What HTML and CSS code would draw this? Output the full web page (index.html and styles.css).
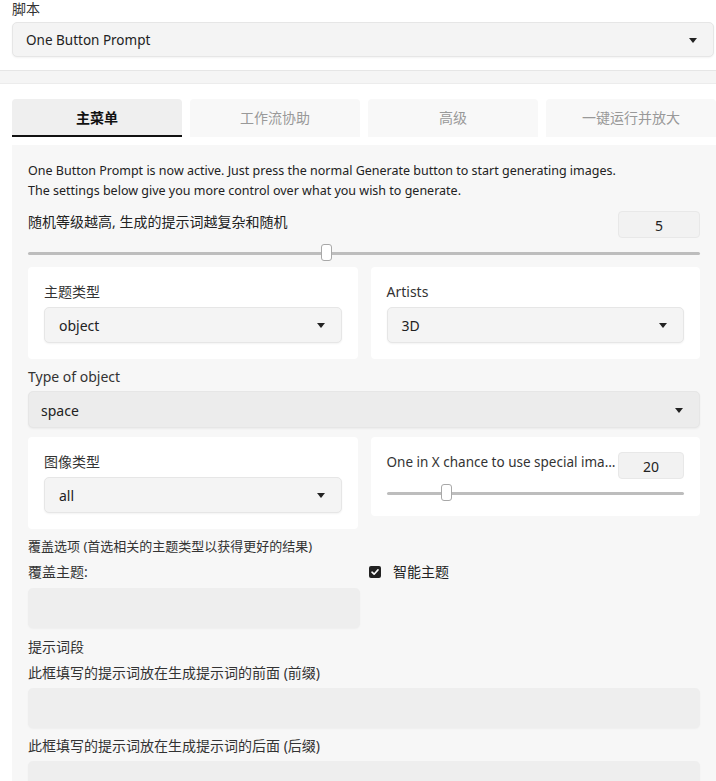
FILE: index.html
```html
<!DOCTYPE html>
<html lang="zh">
<head>
<meta charset="UTF-8">
<title>One Button Prompt</title>
<link rel="stylesheet" href="styles.css">
</head>
<body>

<!-- Skript Auswahl -->
<div class="script">
    <div class="label">脚本</div>
    <div class="select top">One Button Prompt<span class="caret"></span></div>
</div>

<div class="divider"></div>

<!-- Tabs -->
<div class="tabs">
    <div class="tab active">主菜单</div>
    <div class="tab">工作流协助</div>
    <div class="tab">高级</div>
    <div class="tab">一键运行并放大</div>
</div>

<div class="panel">
    <p class="intro">One Button Prompt is now active. Just press the normal Generate button to start generating images.</p>
    <p class="intro">The settings below give you more control over what you wish to generate.</p>

    <div class="num-row level">
        <span>随机等级越高, 生成的提示词越复杂和随机</span>
        <div class="num wide">5</div>
    </div>
    <div class="slider level-slider">
        <div class="thumb" style="left: 293px;"></div>
    </div>

    <div class="cards first">
        <div class="card">
            <div class="label">主题类型</div>
            <div class="select">object<span class="caret"></span></div>
        </div>
        <div class="card">
            <div class="label">Artists</div>
            <div class="select">3D<span class="caret"></span></div>
        </div>
    </div>

    <div class="label type-label">Type of object</div>
    <div class="select dark">space<span class="caret"></span></div>

    <div class="cards second">
        <div class="card">
            <div class="label">图像类型</div>
            <div class="select">all<span class="caret"></span></div>
        </div>
        <div class="card short">
            <div class="num-row">
                <span class="chance">One in X chance to use special ima…</span>
                <div class="num">20</div>
            </div>
            <div class="slider chance-slider">
                <div class="thumb" style="left: 54px;"></div>
            </div>
        </div>
    </div>

    <div class="label small override">覆盖选项 (首选相关的主题类型以获得更好的结果)</div>
    <div class="override-row">
        <div class="half">
            <div class="label">覆盖主题:</div>
            <div class="textbox"></div>
        </div>
        <label class="check">
            <span class="box"><svg width="12" height="12" viewBox="0 0 12 12"><path d="M3 6.2 L5.1 8.2 L9 3.9" fill="none" stroke="#fff" stroke-width="1.6" stroke-linecap="round" stroke-linejoin="round"/></svg></span>
            智能主题
        </label>
    </div>

    <div class="label section">提示词段</div>
    <div class="label">此框填写的提示词放在生成提示词的前面 (前缀)</div>
    <div class="textbox"></div>
    <div class="label">此框填写的提示词放在生成提示词的后面 (后缀)</div>
    <div class="textbox"></div>
</div>

</body>
</html>
```

FILE: styles.css
```css
/* Allgemeine Stile */
body {
    margin: 0;
    padding: 0;
    width: 716px;
    height: 781px;
    font-family: "Noto Sans", "Noto Sans CJK SC", sans-serif;
    font-size: 14px;
    color: #222;
    background-color: white;
    overflow: hidden;
}

p {
    margin: 0;
}

.label {
    font-size: 14px;
    line-height: 18px;
    color: #333;
}

/* Skript Auswahl */
.script {
    padding: 0 2px 0 12px;
}

.script .label {
    line-height: 16px;
    height: 16px;
    padding-top: 1px;
    margin-bottom: -1px;
}

.select {
    position: relative;
    height: 36px;
    line-height: 36px;
    padding-left: 14px;
    background-color: #f4f4f4;
    border: 1px solid #e6e6e6;
    border-radius: 5px;
    box-sizing: border-box;
    box-shadow: 0 1px 2px rgba(0, 0, 0, 0.05);
    color: #222;
}

.select.top {
    margin-top: 6px;
    height: 35px;
    line-height: 34px;
    font-size: 13.5px;
    padding-left: 13px;
}

.select.dark {
    background-color: #ececec;
    height: 37px;
    line-height: 37px;
    padding-left: 12px;
}

.caret {
    position: absolute;
    right: 16px;
    top: 50%;
    margin-top: -2px;
    border-left: 4px solid transparent;
    border-right: 4px solid transparent;
    border-top: 5px solid #222;
}

.divider {
    margin-top: 13px;
    height: 12px;
    background-color: #f5f5f5;
    border-top: 1px solid #e6e6e6;
    border-bottom: 1px solid #ececec;
}

/* Tabs */
.tabs {
    display: flex;
    gap: 8px;
    padding: 15px 0 0 12px;
}

.tab {
    width: 170px;
    flex-shrink: 0;
    height: 38px;
    line-height: 38px;
    text-align: center;
    background-color: #f8f8f8;
    color: #999;
    border-radius: 4px 4px 0 0;
    box-sizing: border-box;
}

.tab.active {
    background-color: #efefef;
    color: #111;
    font-weight: bold;
    border-bottom: 2px solid #111;
    line-height: 37px;
}

/* Panel */
.panel {
    margin: 8px 0 0 12px;
    padding: 16px 16px 0 16px;
    background-color: #f7f7f7;
    height: 700px;
}

.intro {
    font-size: 12.5px;
    line-height: 20px;
    color: #222;
}

.num-row {
    display: flex;
    justify-content: space-between;
    align-items: flex-start;
}

.num-row.level {
    margin-top: 10px;
}

.num {
    width: 66px;
    height: 27px;
    line-height: 27px;
    text-align: center;
    background-color: #f2f2f2;
    border: 1px solid #e8e8e8;
    border-radius: 4px;
    box-sizing: border-box;
}

.num.wide {
    width: 82px;
}

.slider {
    position: relative;
    height: 3px;
    background-color: #bdbdbd;
    border-radius: 2px;
}

.level-slider {
    margin-top: 14px;
}

.thumb {
    position: absolute;
    top: -8px;
    width: 11px;
    height: 17px;
    background-color: white;
    border: 1px solid #a8a8a8;
    border-radius: 3px;
    box-sizing: border-box;
}

.cards {
    display: flex;
    gap: 13px;
    align-items: flex-start;
}

.cards.first {
    margin-top: 12px;
}

.cards.second {
    margin-top: 9px;
}

.card {
    flex: 1;
    background-color: white;
    padding: 16px;
    border-radius: 4px;
}

.card .label {
    margin-bottom: 6px;
}

.card.short {
    padding-top: 15px;
    padding-bottom: 21px;
}

.chance {
    margin-top: 1px;
    font-size: 13.5px;
    line-height: 18px;
    white-space: nowrap;
    color: #333;
}

.chance-slider {
    margin-top: 13px;
}

.type-label {
    margin-top: 9px;
    margin-bottom: 5px;
}

.label.small {
    font-size: 13px;
}

.override {
    margin-top: 8px;
}

.override-row {
    display: flex;
    margin-top: 8px;
}

.half {
    width: 332px;
}

.half .label {
    margin-bottom: 7px;
}

.textbox {
    height: 40px;
    background-color: #eeeeee;
    border-radius: 5px;
    box-shadow: 0 1px 2px rgba(0, 0, 0, 0.04);
}

.check {
    display: flex;
    align-items: flex-start;
    margin-left: 9px;
    font-size: 14px;
    line-height: 18px;
    color: #222;
}

.box {
    display: inline-block;
    width: 12px;
    height: 12px;
    margin-top: 3px;
    margin-right: 12px;
    background-color: #222;
    border-radius: 2px;
}

.box svg {
    display: block;
}

.section {
    margin-top: 10px;
    margin-bottom: 8px;
}

.label + .textbox {
    margin-top: 6px;
}

.textbox + .label {
    margin-top: 9px;
}
```
